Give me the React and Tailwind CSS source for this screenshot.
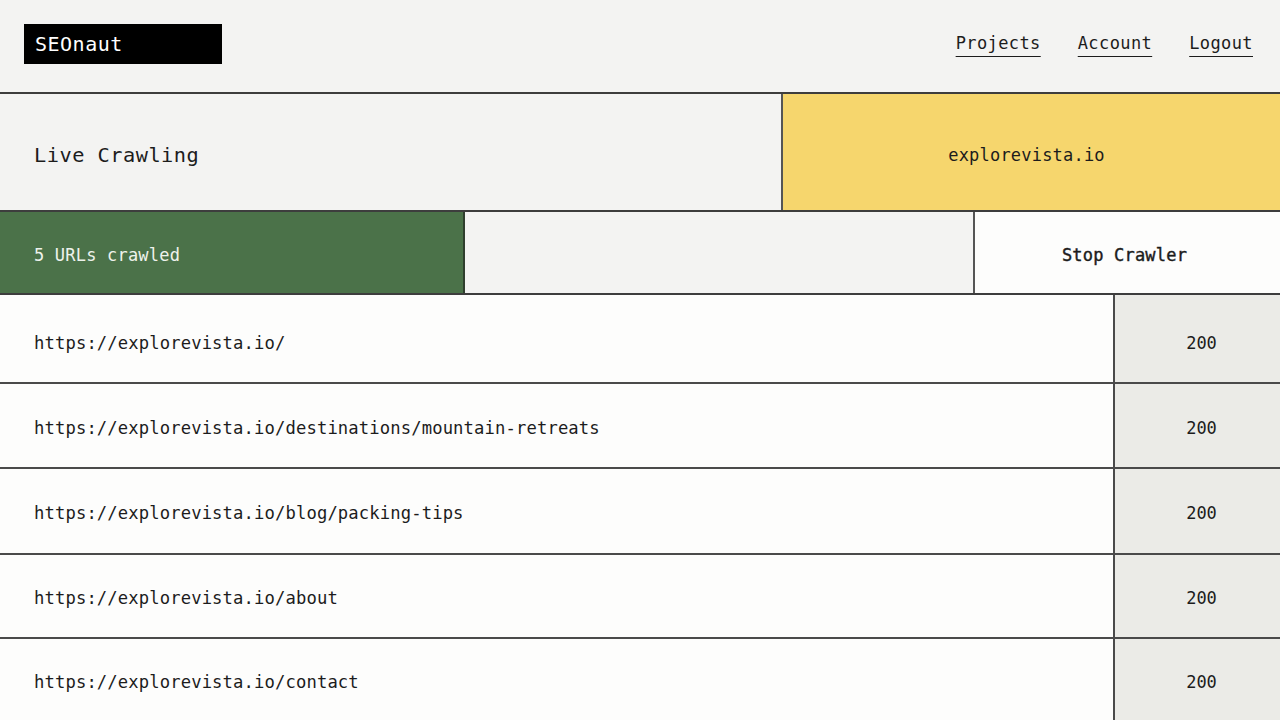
import React from 'react';

const mono = { fontFamily: '"DejaVu Sans Mono", "Liberation Mono", monospace' };

const rows = [
  { url: 'https://explorevista.io/', status: 200, h: 'h-[89px]', pt: 'pt-[10px]' },
  { url: 'https://explorevista.io/destinations/mountain-retreats', status: 200, h: 'h-[85px]', pt: 'pt-[6px]' },
  { url: 'https://explorevista.io/blog/packing-tips', status: 200, h: 'h-[86px]', pt: 'pt-[6px]' },
  { url: 'https://explorevista.io/about', status: 200, h: 'h-[84px]', pt: 'pt-[6px]' },
  { url: 'https://explorevista.io/contact', status: 200, h: 'h-[86px]', pt: 'pt-[3px]' },
];

const NavLink = ({ children }) => (
  <a href="#" className="text-[17px] text-[#1c1c1c] underline decoration-[1px] underline-offset-[7px] tracking-[0.4px]">
    {children}
  </a>
);

export default function App() {
  return (
    <div style={mono} className="w-[1280px] h-[720px] overflow-hidden bg-[#f3f3f2] text-[#1c1c1c]">
      {/* Top bar */}
      <header className="h-[94px] flex items-start justify-between border-b-2 border-[#3d3d3d] bg-[#f3f3f2]">
        <div className="ml-[24px] mt-[24px] w-[198px] h-[40px] bg-black flex items-center pl-[11px]">
          <span className="text-white text-[20px] tracking-[0.5px]">SEOnaut</span>
        </div>
        <nav className="flex gap-[37px] mr-[27px] mt-[31px]">
          <NavLink>Projects</NavLink>
          <NavLink>Account</NavLink>
          <NavLink>Logout</NavLink>
        </nav>
      </header>

      {/* Project heading */}
      <section className="h-[118px] flex border-b-2 border-[#3d3d3d]">
        <div className="w-[781px] flex items-center pl-[34px] pt-[7px] bg-[#f3f3f2]">
          <h1 className="text-[20.3px] tracking-[0.5px]">Live Crawling</h1>
        </div>
        <div className="flex-1 flex items-center justify-center pt-[7px] bg-[#f6d66d] border-l-2 border-[#555]">
          <span className="text-[17px] tracking-[0.2px] -ml-[10px]">explorevista.io</span>
        </div>
      </section>

      {/* Crawl status */}
      <section className="h-[83px] flex border-b-2 border-[#3d3d3d]">
        <div className="w-[465px] flex items-center pl-[34px] pt-[6px] bg-[#4b7249] border-r-2 border-[#2f3f2e]">
          <span className="text-[17px] text-[#eef2ec] tracking-[0.2px]">5 URLs crawled</span>
        </div>
        <div className="w-[510px] bg-[#f3f3f2] border-r-2 border-[#555]" />
        <button className="flex-1 flex items-center justify-center pt-[6px] pr-[6px] bg-[#fdfdfc] text-[17px] tracking-[0.2px] [-webkit-text-stroke:0.4px_#1c1c1c]">
          Stop Crawler
        </button>
      </section>

      {/* Crawled URLs */}
      <div className="bg-[#fdfdfc]">
        {rows.map((row, i) => (
          <div key={i} className={`${row.h} flex border-b-2 border-[#4a4a4a]`}>
            <div className={`w-[1115px] flex items-center pl-[34px] ${row.pt} border-r-2 border-[#4a4a4a]`}>
              <span className="text-[17.2px] tracking-[0.13px]">{row.url}</span>
            </div>
            <div className={`flex-1 flex items-center justify-center ${row.pt} pl-[8px] bg-[#ebebe7]`}>
              <span className="text-[17px]">{row.status}</span>
            </div>
          </div>
        ))}
      </div>
    </div>
  );
}
